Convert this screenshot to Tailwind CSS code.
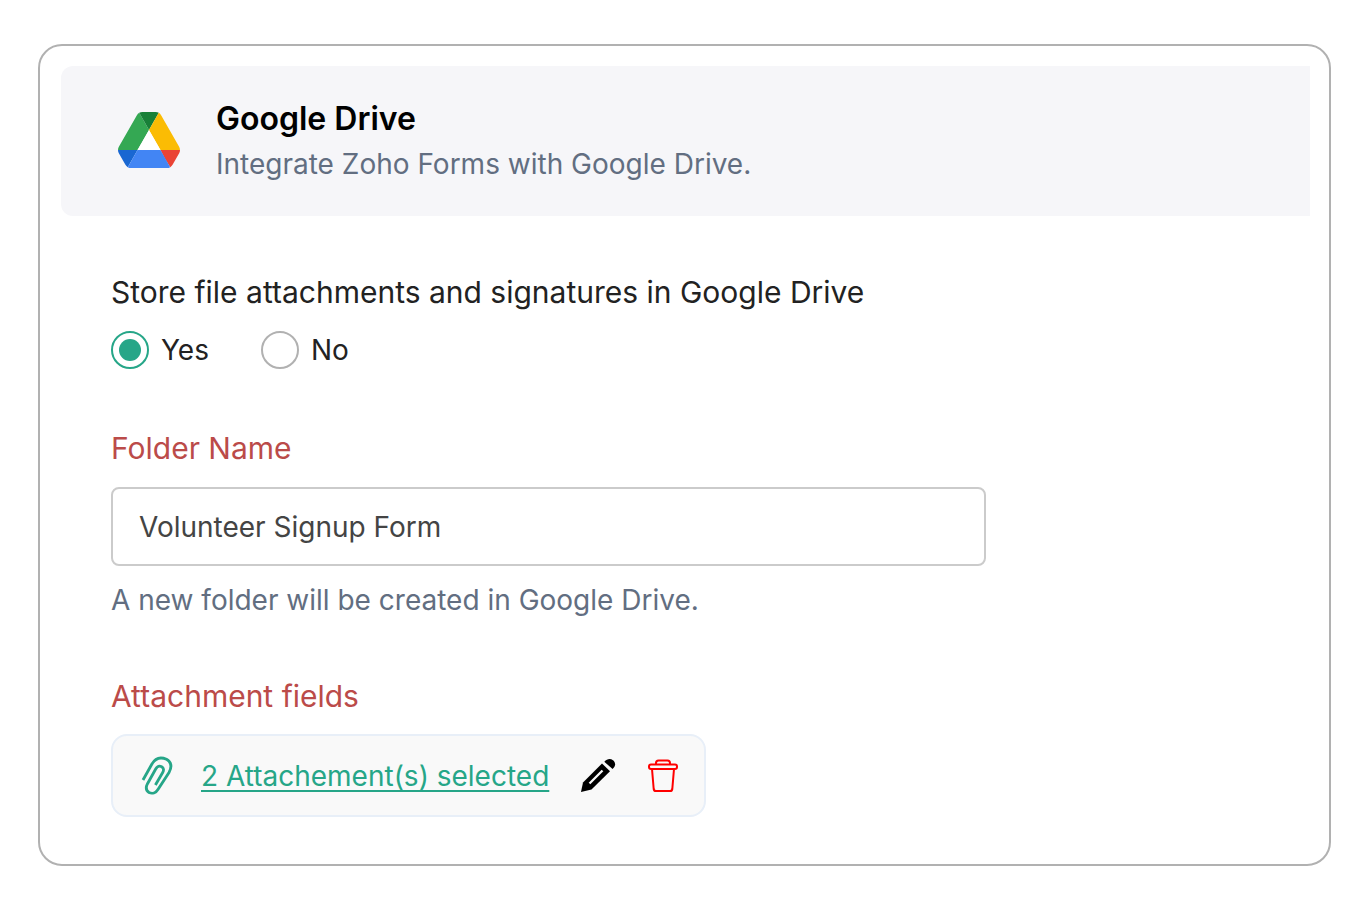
<!DOCTYPE html>
<html lang="en">
<head>
    <meta charset="UTF-8">
    <meta name="viewport" content="width=device-width, initial-scale=1.0">
    <title>Google Drive Integration</title>
    <script src="https://cdn.jsdelivr.net/npm/@tailwindcss/browser@4"></script>
</head>
<body class="bg-white px-[38px] py-11 font-['Inter',sans-serif] text-[#222222]">

    <main class="rounded-3xl border-2 border-[#b1b1b1] pt-5 pr-[19px] pb-[47px] pl-[21px]">
        <header class="flex items-start rounded-l-xl bg-[#f6f6f9] px-[57px] pt-8 pb-7">
            <svg class="mt-3.5 h-14 w-[62px] shrink-0" viewBox="0 0 87.3 78" preserveAspectRatio="none" aria-hidden="true">
                <path d="m6.6 66.85 3.85 6.65c.8 1.4 1.95 2.5 3.3 3.3l13.75-23.8h-27.5c0 1.55.4 3.1 1.2 4.5z" fill="#1967d2"/>
                <path d="m43.65 25-13.75-23.8c-1.35.8-2.5 1.9-3.3 3.3l-25.4 44a9.06 9.06 0 0 0 -1.2 4.5h27.5z" fill="#34a853"/>
                <path d="m73.55 76.8c1.35-.8 2.5-1.9 3.3-3.3l1.6-2.75 7.65-13.25c.8-1.4 1.2-2.95 1.2-4.5h-27.502l5.852 11.5z" fill="#ea4335"/>
                <path d="m43.65 25 13.75-23.8c-1.35-.8-2.9-1.2-4.5-1.2h-18.5c-1.6 0-3.15.45-4.5 1.2z" fill="#188038"/>
                <path d="m59.8 53h-32.3l-13.75 23.8c1.35.8 2.9 1.2 4.5 1.2h50.8c1.6 0 3.15-.45 4.5-1.2z" fill="#4285f4"/>
                <path d="m73.4 26.5-12.7-22c-.8-1.4-1.95-2.5-3.3-3.3l-13.75 23.8 16.15 28h27.45c0-1.55-.4-3.1-1.2-4.5z" fill="#fbbc04"/>
                <path d="m43.65 25-16.15 28h32.3z" fill="#ffffff"/>
            </svg>
            <div class="ml-9">
                <h1 class="text-[32px] leading-[42px] font-semibold text-black">Google Drive</h1>
                <p class="text-[28px] leading-[48px] text-[#626e81]">Integrate Zoho Forms with Google Drive.</p>
            </div>
        </header>

        <form class="px-[50px] pt-14">
            <fieldset>
                <legend class="text-[30px] leading-10">Store file attachments and signatures in Google Drive</legend>
                <div class="mt-[18px] flex gap-[52px] text-[28px] leading-10">
                    <label class="flex items-center gap-3">
                        <input type="radio" name="store" value="yes" checked class="size-[38px] appearance-none rounded-full border-2 border-[#b1b1b1] checked:border-[#26a688] checked:bg-[#26a688] checked:bg-clip-content p-1.5">
                        Yes
                    </label>
                    <label class="flex items-center gap-3">
                        <input type="radio" name="store" value="no" class="size-[38px] appearance-none rounded-full border-2 border-[#b1b1b1] checked:border-[#26a688] checked:bg-[#26a688] checked:bg-clip-content p-1.5">
                        No
                    </label>
                </div>
            </fieldset>

            <div class="mt-[58px]">
                <label for="folder-name" class="block text-[30px] leading-10 text-[#bb4b49]">Folder Name</label>
                <input type="text" id="folder-name" value="Volunteer Signup Form" class="mt-[19px] block h-[79px] w-full max-w-[875px] rounded-lg border-2 border-[#cbcbcb] px-[26px] text-[28px] text-[#444444]">
                <p class="mt-4 text-[28px] leading-9 text-[#626e81]">A new folder will be created in Google Drive.</p>
            </div>

            <section class="mt-[58px]">
                <h2 class="text-[30px] leading-10 text-[#bb4b49]">Attachment fields</h2>
                <div class="mt-[18px] flex h-[83px] w-full max-w-[595px] items-center rounded-2xl border-2 border-[#e8eff8] bg-[#f9f9f9] px-6">
                    <svg class="h-10 w-10 shrink-0" viewBox="0 0 40 40" fill="none" stroke="#26a688" stroke-width="2.8" aria-hidden="true">
                        <path d="M6 24 14.800 8.300C18.500 1.700 24 .9 29.500 3.300 34.500 6.200 35 11 32 16.500L21.300 33C19 37 15 38 12 36.500 9 34.500 8.800 31 10.500 27.700L18.700 13C20.300 10.200 22.300 9.500 24.700 10.700 26.800 11.900 27 14.300 25.700 16.500L18.400 29"/>
                    </svg>
                    <a href="#" class="ml-6 flex-1 text-[28px] leading-9 text-[#26a688] underline decoration-2 underline-offset-4">2 Attachement(s) selected</a>
                    <button type="button" aria-label="Edit attachments" class="shrink-0">
                        <svg class="size-9" viewBox="0 0 36 36" aria-hidden="true">
                            <path d="M1 34 3 24.500 22 5.500 30 13.300 11.500 31.500Z" fill="#000000"/>
                            <path d="M9.500 25.500 22.500 12.500" fill="none" stroke="#f9f9f9" stroke-width="2.300"/>
                            <path d="M24.300 3.800C27 1 30 0 33 2.200 36 4.700 35.700 8.500 32.600 11Z" fill="#000000"/>
                        </svg>
                    </button>
                    <button type="button" aria-label="Remove attachments" class="ml-8 shrink-0">
                        <svg class="h-9 w-8" viewBox="0 0 32 36" fill="none" stroke="#ff0000" stroke-width="2" stroke-linejoin="round" aria-hidden="true">
                            <rect x="1" y="6.500" width="28" height="4.500" rx="2"/>
                            <path d="M8 6.500V5Q8 2.500 10.500 2.500H19.500Q22 2.500 22 5V6.500M4 11 5.700 31Q6 33 7.800 33H22.200Q24 33 24.300 31L26 11"/>
                        </svg>
                    </button>
                </div>
            </section>
        </form>
    </main>

</body>
</html>
